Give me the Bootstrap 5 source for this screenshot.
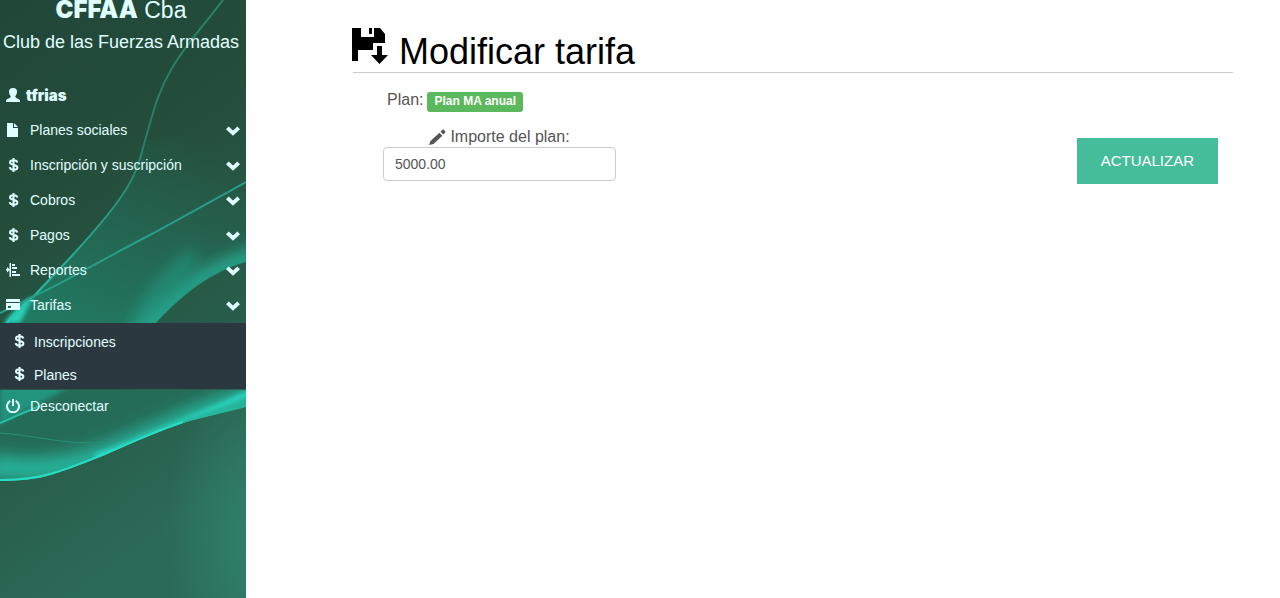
<!DOCTYPE html>
<html lang="es">
<head>
<meta charset="utf-8">
<meta name="viewport" content="width=device-width, initial-scale=1">
<title>Modificar tarifa</title>
<link href="https://cdn.jsdelivr.net/npm/bootstrap@5.3.0/dist/css/bootstrap.min.css" rel="stylesheet">
<style>
  body { font-family: "Liberation Sans", Arial, sans-serif; color: #555; font-size: 16px; }
  .sidebar { width: 246px; background: #24503f; color: #e0ffff; isolation: isolate; }
  .sidebar-art { z-index: -1; }
  .brand { font-size: 23px; line-height: 20px; margin-bottom: 3px; padding-right: 4px; }
  .brand strong, .user-name { font-family: Inter, "Arial Black", sans-serif; font-weight: 900; }
  .brand strong { font-size: 24px; }
  .user-name { font-size: 15px; line-height: 20px; }
  .club { font-size: 18px; line-height: 38px; padding-right: 4px; }
  .menu { font-size: 14px; margin-top: 17px; }
  .menu a { color: inherit; text-decoration: none; }
  .menu-row { height: 35px; padding: 0 6px; }
  .menu-row .ico { margin: 0 10px 2px 0; }
  .ico { width: 14px; height: 14px; fill: currentColor; flex: none; }
  .ico-s { fill: none; stroke: currentColor; stroke-width: 2; }
  .menu-row.user .ico { margin-right: 6px; }
  .submenu { background: #2c3840; }
  .submenu .menu-row { height: 33px; padding: 5px 12px 0; }
  .submenu .ico { margin-right: 8px; }
  .content { padding: 24px 47px 0 106px; }
  .page-title { font-size: 36px; line-height: 41px; color: #000; border-bottom: 1px solid #ccc; margin: 0 0 0 1px; padding-top: 4px; }
  .page-title .ico { width: 36px; height: 36px; margin: 0 11px 8px -1px; }
  .fields { padding: 15px 15px 0 31px; }
  .plan-tag { background: #5cb85c; font-size: 12px; line-height: 12px; padding: 3px 7px 5px; border-radius: 3px; }
  .price-row { margin-top: 15px; }
  .amount { width: 233px; margin-bottom: 3px; }
  .amount label { line-height: 20px; }
  .amount .ico { width: 17px; height: 17px; }
  .amount input { height: 34px; font-size: 14px; color: #555; border-color: #ccc; padding: 6px 11px; border-radius: 4px; }
  .btn-update { background: #45bc9a; color: #fff; border-radius: 0; border: 0; font-size: 15px; line-height: 22px; padding: 12px 24px; }
  .btn-update:hover { background: #38a585; color: #fff; }
</style>
</head>
<body>
<svg class="d-none" aria-hidden="true">
  <symbol id="i-user" viewBox="0 0 14 14"><path d="M7 0C4.300 0 2.800 1.600 3 4c.1 1.800.8 3.200 1.600 4 .3 1.200-.2 1.700-1.400 2.200C1.500 10.900.2 11.400 0 12.700V14h14v-1.300c-.2-1.300-1.500-1.800-3.200-2.500-1.200-.5-1.700-1-1.400-2.200.8-.8 1.500-2.200 1.600-4C11.200 1.600 9.700 0 7 0z"/></symbol>
  <symbol id="i-file" viewBox="0 0 14 14"><path d="M1 0h6v5h5v9H1zM8 0l4 4H8z"/></symbol>
  <symbol id="i-usd" viewBox="0 0 14 14"><path class="ico-s" d="M11.300 4.500C11 2.900 9.500 2.300 7.500 2.300 5.300 2.300 4 3.100 4 4.500c0 3.300 7.400 1.600 7.400 4.900 0 1.600-1.600 2.300-3.800 2.300-2.300 0-3.700-.8-3.900-2.500M7.500 0v14"/></symbol>
  <symbol id="i-report" viewBox="0 0 14 14"><path d="M3.500 0H5v14H3.500zM0 6h4v1.500H0zM1 4l3 2.700L1 9.400zM6 1h3v2H6zM6 4h5v2H6zM6 8h4v2H6zM6 11h8v2H6z"/></symbol>
  <symbol id="i-card" viewBox="0 0 14 14"><path d="M0 1h14v3H0zM0 5h14v7H0zM2 8v2h3V8z" fill-rule="evenodd"/></symbol>
  <symbol id="i-off" viewBox="0 0 14 14"><path class="ico-s" d="M4.300 1.900a6 6 0 1 0 5.400 0M7 0v7"/></symbol>
  <symbol id="i-down" viewBox="0 0 14 14"><path d="M2.700 2.500 7 6.600l4.300-4.100L14 5.200l-7 6.600L0 5.200z"/></symbol>
  <symbol id="i-save" viewBox="0 0 36 36"><path d="M0 0h9v9h13V0h6l5 6v9H21v7H6v11H0zM17 0h3v6h-3zM25 18h5v9h6l-8.500 9L19 27h6z"/></symbol>
  <symbol id="i-pencil" viewBox="0 0 17 17"><path d="M0 16l1.500-4L10.500 3.700l2.900 3L4.500 15zM11.500 2.700 13.300 1c.6-.6 1.200-.6 1.800 0l.9.9c.6.600.6 1.200 0 1.800l-1.700 1.900z"/></symbol>
</svg>

<div class="d-flex min-vh-100">
  <aside class="sidebar position-relative flex-shrink-0 overflow-hidden">
    <svg class="sidebar-art position-absolute top-0 start-0 w-100 h-100" viewBox="0 0 246 598" preserveAspectRatio="xMinYMin slice" aria-hidden="true">
      <defs>
        <linearGradient id="base" x1="0" y1="0" x2=".3" y2="1"><stop offset="0" stop-color="#204738"/><stop offset=".35" stop-color="#244c3b"/><stop offset=".7" stop-color="#285b49"/><stop offset="1" stop-color="#2b6a57"/></linearGradient>
        <radialGradient id="side" gradientUnits="userSpaceOnUse" cx="0" cy="0" r="1" gradientTransform="translate(250 540) scale(85 170)"><stop offset="0" stop-color="#318b74" stop-opacity=".7"/><stop offset="1" stop-color="#318b74" stop-opacity="0"/></radialGradient>
        <linearGradient id="veil" gradientUnits="userSpaceOnUse" x1="200" y1="140" x2="60" y2="340"><stop offset="0" stop-color="#1f8a70" stop-opacity="0"/><stop offset="1" stop-color="#1f8a70" stop-opacity=".7"/></linearGradient>
        <linearGradient id="thread" gradientUnits="userSpaceOnUse" x1="220" y1="0" x2="0" y2="323"><stop offset="0" stop-color="#26856a"/><stop offset=".4" stop-color="#287d66"/><stop offset=".6" stop-color="#27987e"/><stop offset="1" stop-color="#25cdb3"/></linearGradient>
        <filter id="soft2"><feGaussianBlur stdDeviation="2"/></filter>
        <filter id="soft8" x="-40%" y="-40%" width="180%" height="180%"><feGaussianBlur stdDeviation="8"/></filter>
        <clipPath id="above"><path d="M0 0H246V262C210 272 182 295 156 323H0z"/></clipPath>
        <clipPath id="wave"><path d="M0 390H246V407C225 413 205 416 183 423C140 437 100 460 54 474C35 480 18 481 0 481z"/></clipPath>
      </defs>
      <path fill="url(#base)" d="M0 0h246v598H0z"/>
      <path fill="url(#side)" d="M0 370h246v228H0z"/>
      <g clip-path="url(#above)">
        <path fill="url(#veil)" d="M146 141C138 170 130 185 116 204C90 239 60 268 34 296L3 323H160L246 262V120z"/>
        <path filter="url(#soft8)" fill="none" stroke="#22a088" stroke-opacity=".7" stroke-width="14" d="M125 350C145 305 165 280 195 255"/>
        <path filter="url(#soft8)" fill="none" stroke="#27b49a" stroke-width="14" d="M140 340C175 295 205 270 260 255"/>
        <path filter="url(#soft2)" fill="#26cfb7" d="M34 296Q20 302 4 323H20z"/>
      </g>
      <path fill="none" stroke="url(#thread)" stroke-width="2" d="M223 0C205 24 187 43 172 68C156 95 152 118 144 144C138 170 130 185 116 204C90 239 60 268 34 296Q20 306 7 323"/>
      <path fill="none" stroke="#279e85" stroke-width="2" d="M246 182C210 202 180 219 150 235C105 258 60 285 34 296Q15 306 0 313"/>
      <g clip-path="url(#wave)">
        <path fill="#256c58" d="M0 380h246v110H0z"/>
        <path filter="url(#soft2)" fill="#23937c" d="M0 380H84Q35 405 0 424z"/>
        <path filter="url(#soft8)" fill="none" stroke="#25b69d" stroke-width="22" d="M256 396C190 414 140 444 90 460Q45 474-10 466"/>
        <path filter="url(#soft2)" fill="none" stroke="#29d5bf" stroke-width="6" d="M266 386C215 408 150 438 95 457"/>
        <path filter="url(#soft2)" fill="none" stroke="#25b69d" stroke-width="8" d="M256 402C215 413 170 427 130 446"/>
        <path fill="none" stroke="#29dbc3" stroke-width="4" d="M183 423C140 437 100 460 54 474C35 480 18 481 0 481"/>
      </g>
      <path fill="none" stroke="#27bfa5" stroke-width="2" d="M0 423Q20 414 40 406"/>
      <path fill="none" stroke="#2a9179" d="M0 433C35 435 65 446 112 442"/>
    </svg>

    <div class="brand text-center"><strong>CFFAA</strong> Cba</div>
    <div class="club text-center text-nowrap">Club de las Fuerzas Armadas</div>
    <nav class="menu" aria-label="Principal">
      <a href="#" class="menu-row user d-flex align-items-center"><svg class="ico"><use href="#i-user"/></svg><span class="user-name">tfrias</span></a>
      <a href="#" class="menu-row d-flex align-items-center"><svg class="ico"><use href="#i-file"/></svg><span>Planes sociales</span><svg class="ico ms-auto me-0 mb-0"><use href="#i-down"/></svg></a>
      <a href="#" class="menu-row d-flex align-items-center"><svg class="ico"><use href="#i-usd"/></svg><span>Inscripción y suscripción</span><svg class="ico ms-auto me-0 mb-0"><use href="#i-down"/></svg></a>
      <a href="#" class="menu-row d-flex align-items-center"><svg class="ico"><use href="#i-usd"/></svg><span>Cobros</span><svg class="ico ms-auto me-0 mb-0"><use href="#i-down"/></svg></a>
      <a href="#" class="menu-row d-flex align-items-center"><svg class="ico"><use href="#i-usd"/></svg><span>Pagos</span><svg class="ico ms-auto me-0 mb-0"><use href="#i-down"/></svg></a>
      <a href="#" class="menu-row d-flex align-items-center"><svg class="ico"><use href="#i-report"/></svg><span>Reportes</span><svg class="ico ms-auto me-0 mb-0"><use href="#i-down"/></svg></a>
      <a href="#" class="menu-row d-flex align-items-center"><svg class="ico"><use href="#i-card"/></svg><span>Tarifas</span><svg class="ico ms-auto me-0 mb-0"><use href="#i-down"/></svg></a>
      <div class="submenu">
        <a href="#" class="menu-row d-flex align-items-center"><svg class="ico"><use href="#i-usd"/></svg><span>Inscripciones</span></a>
        <a href="#" class="menu-row d-flex align-items-center"><svg class="ico"><use href="#i-usd"/></svg><span>Planes</span></a>
      </div>
      <a href="#" class="menu-row d-flex align-items-center"><svg class="ico"><use href="#i-off"/></svg><span>Desconectar</span></a>
    </nav>
  </aside>

  <main class="content flex-grow-1">
    <h1 class="page-title d-flex align-items-end fw-normal"><svg class="ico"><use href="#i-save"/></svg>Modificar tarifa</h1>
    <form class="fields">
      <div class="d-flex align-items-center ps-1">Plan: <span class="badge plan-tag ms-1 mt-1">Plan MA anual</span></div>
      <div class="price-row d-flex justify-content-between align-items-end">
        <div class="amount">
          <label for="importe" class="d-flex align-items-center justify-content-center gap-1"><svg class="ico"><use href="#i-pencil"/></svg>Importe del plan:</label>
          <input id="importe" type="text" class="form-control" value="5000.00">
        </div>
        <button type="submit" class="btn btn-update">ACTUALIZAR</button>
      </div>
    </form>
  </main>
</div>
<script src="https://cdn.jsdelivr.net/npm/bootstrap@5.3.0/dist/js/bootstrap.bundle.min.js"></script>
</body>
</html>
